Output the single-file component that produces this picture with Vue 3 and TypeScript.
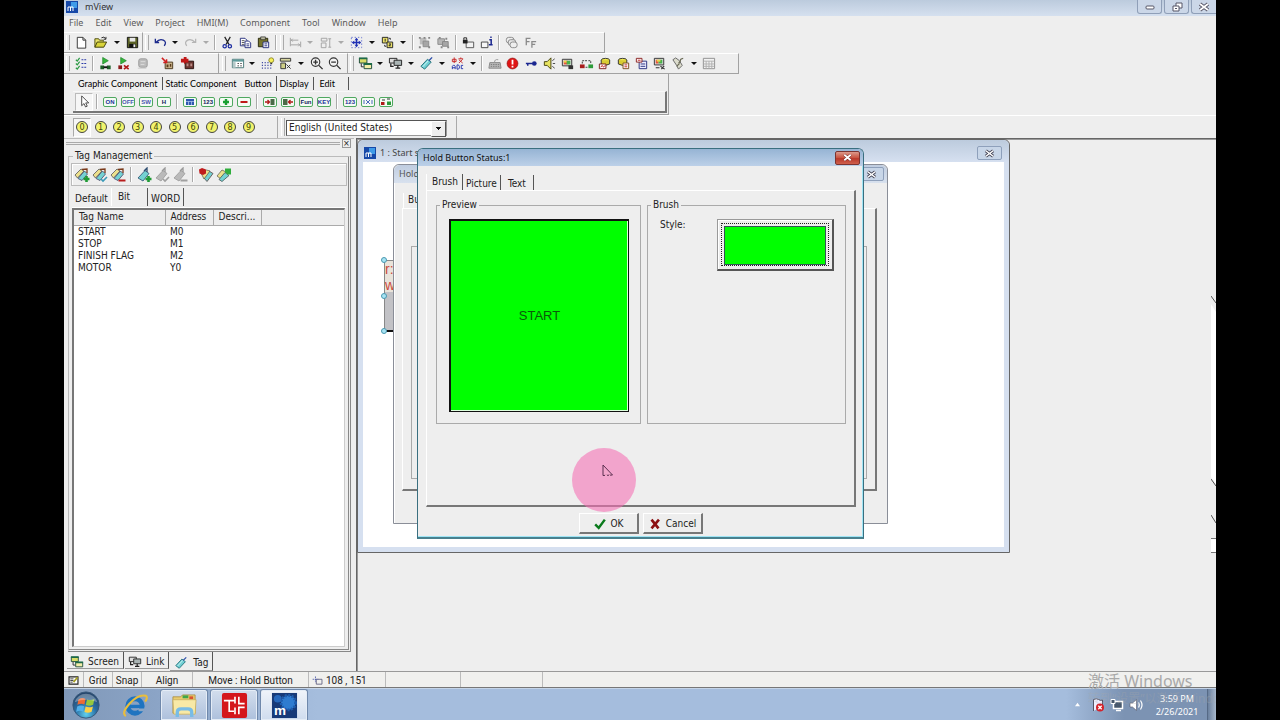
<script setup lang="ts">
import { ref } from 'vue'

type Item = string

const menus = ['File', 'Edit', 'View', 'Project', 'HMI(M)', 'Component', 'Tool', 'Window', 'Help']

// Drawn on a 16 x 16 grid
const art: Record<string, string> = {
  new: '<path d="M3.500 2.500h6l3 3v8.500h-9z" fill="#fff" stroke="#333"/><path d="M9.500 2.500v3h3" fill="none" stroke="#333"/>',
  open: '<path d="M2 13V4h4l1 1.500h4V7" fill="#e9e46a" stroke="#4c4c10"/><path d="M2 13l2.500-5.500h10L11.500 13z" fill="#d9d43a" stroke="#3c3c08"/><path d="M9 3q3-2 4.500 1M13.800 2v2.500h-2.500" fill="none" stroke="#222"/>',
  save: '<path d="M2.500 2.500h11v11h-11z" fill="#5b6226" stroke="#111"/><path d="M5 3h6v4H5z" fill="#e8e8e8"/><path d="M4.500 9.500h7v4h-7z" fill="#111"/><path d="M9 10h2v3H9z" fill="#eee"/>',
  undo: '<path d="M2.500 4v4h4M3 8q4-4.500 8-2.500t1 6" fill="none" stroke="#1c2a8c" stroke-width="1.400"/>',
  redo: '<path d="M13.500 4v4h-4M13 8Q9 3.500 5 5.500t-1 6" fill="none" stroke="#b4b4b4" stroke-width="1.300"/>',
  cut: '<path d="M5 2l4.500 8M11 2L6.500 10" stroke="#222" stroke-width="1.300"/><circle cx="5" cy="12" r="1.800" fill="none" stroke="#1b2ba0" stroke-width="1.300"/><circle cx="10.500" cy="12" r="1.800" fill="none" stroke="#1b2ba0" stroke-width="1.300"/>',
  copy: '<path d="M2.500 3.500h5l2 2v6h-7z" fill="#fff" stroke="#28307e"/><path d="M4 6h3M4 8h3M4 10h3" stroke="#555"/><path d="M7.500 6.500h4l2 2v5h-6z" fill="#fff" stroke="#28307e"/><path d="M9 9.500h3M9 11.500h3" stroke="#28307e"/>',
  paste: '<path d="M2.500 3.500h10v9h-10z" fill="#77752e" stroke="#26260c"/><path d="M5 2h5v3H5z" fill="#b9b9a0" stroke="#222" stroke-width=".7"/><path d="M7.500 7.500h6v6h-6z" fill="#fff" stroke="#28307e"/><path d="M9 9.500h3M9 11.500h3" stroke="#28307e"/>',
  alignx: '<path d="M2.500 3v9M3 5.500h8M3 10.500h10M13.500 7v6M5 4L3.500 5.500 5 7M11 9l1.500 1.500L11 12" fill="none" stroke="#a2a2a2"/>',
  sizex: '<path d="M3.500 3.500h6v3h-6zM3.500 8.500h5v5h-5zM12.500 4v9M11 4h3M11 13h3" fill="none" stroke="#a2a2a2"/>',
  center: '<path d="M2.500 2.500h11v11h-11z" fill="none" stroke="#6a76d0" stroke-dasharray="1.500 2"/><path d="M8 4v8M4 8h8" stroke="#1f2fb4" stroke-width="1.500"/><path d="M6 5.500L8 3l2 2.500zM6 10.500L8 13l2-2.500zM5.500 6L3 8l2.500 2zM10.500 6L13 8l-2.500 2z" fill="#1f2fb4"/>',
  order: '<path d="M2.500 2.500h6v6h-6z" fill="#ece26a" stroke="#222"/><path d="M7.500 7.500h6v6h-6z" fill="#ece26a" stroke="#222"/><path d="M5.500 4v3M9.500 9.500h2l-2 2h2M11 5V3.500H9.500M5 10.500V12h1.500" fill="none" stroke="#222"/>',
  group: '<path d="M3 3h7v7H3z" fill="#bdbdbd"/><path d="M6.500 6.500h6v6h-6z" fill="#a6a6a6" stroke="#8c8c8c"/><path d="M2 2h2v2H2zM12 2h2v2h-2zM2 12h2v2H2zM12 12h2v2h-2zM7 2h2v2H7z" fill="#868686"/>',
  ungroup: '<path d="M2 4h7v6H2z" fill="#b6b6b6" stroke="#8c8c8c"/><path d="M7 7h6v5H7z" fill="#a6a6a6" stroke="#858585"/><path d="M3 2h2v2H3zM10 3h2v2h-2zM5 12h2v2H5zM12 12h2v2h-2z" fill="#868686"/>',
  lock: '<path d="M5.500 7.500h8v6h-8z" fill="#f2f2f2" stroke="#555"/><path d="M2 5h5v4H2z" fill="#222"/><path d="M3 5V3h3v2" fill="none" stroke="#222"/>',
  info: '<path d="M2.500 7.500h7v6h-7z" fill="#f6f6f6" stroke="#444"/><path d="M11 5h2v5M10.500 10.500h4M12 2.500h1.500" fill="none" stroke="#1b2790" stroke-width="1.600"/>',
  shapes: '<rect x="2.500" y="2.500" width="8" height="6" rx="2.500" fill="none" stroke="#888"/><rect x="4.500" y="5" width="8" height="6" rx="2.500" fill="#e6e6e6" stroke="#888"/><rect x="6.500" y="7.500" width="7.500" height="6" rx="2.500" fill="#eee" stroke="#888"/>',
  fonts: '<path d="M3.500 11V3.500H8M3.500 7H7M9.500 13.500V7H14M9.500 10H13" fill="none" stroke="#8a8a8a" stroke-width="1.400"/>',
  checks: '<path d="M2 4l1.500 1.500L6 2M2 8l1.500 1.500L6 6M2 12.500L3.500 14 6 10.500" fill="none" stroke="#2c9a44" stroke-width="1.300"/><path d="M8 4h6M8 8h6M8 12h6" stroke="#2b3aa8" stroke-dasharray="2 1" stroke-width="1.300"/>',
  run: '<path d="M5 1.500l6 3.500-6 3.500z" fill="#36b43c" stroke="#178021" stroke-width=".7"/><path d="M2.500 10h4v4h-4zM9.500 10h4v4h-4z" fill="#1c5e28"/><path d="M6 12h4" stroke="#111" stroke-width="2"/>',
  runx: '<path d="M5 1.500l6 3.500-6 3.500z" fill="#36b43c" stroke="#178021" stroke-width=".7"/><path d="M2.500 10h4v4h-4z" fill="#8a1a1a"/><path d="M8.500 10l5 4M13.500 10l-5 4" stroke="#b01818" stroke-width="1.800"/>',
  stop: '<rect x="4" y="3" width="9" height="9" rx="2" fill="#bcbcbc" stroke="#9a9a9a"/><path d="M6 6h5M6 9h4" stroke="#dcdcdc"/><path d="M3 13h9" stroke="#cacaca"/>',
  dl: '<path d="M5.500 6.500h8v7h-8z" fill="#c8b28a" stroke="#4b3a20"/><path d="M7 9h2v3H7zM10.500 8.500H12v3h-1.500z" fill="#5a3c1c"/><path d="M2 2l5 5M7 3.500V7H3.500" fill="none" stroke="#d02020" stroke-width="1.600"/>',
  ul: '<path d="M5.500 5.500h9v8h-9z" fill="#6b3530" stroke="#2a1210"/><path d="M7 8h2v3H7zM11 8h2v3h-2z" fill="#b98c84"/><path d="M1 3h3V1h3v2h2v4H6l-1 2-1-2H1z" fill="#c01818"/>',
  panel: '<path d="M2.500 3.500h12v9h-12z" fill="#fff" stroke="#487878"/><path d="M3 4h11v2H3z" fill="#5f9c9c"/><path d="M3 6.500h3v6H3z" fill="#b5c8c8"/><path d="M8 8h1.500M11 8h1.500M8 10.500h1.500M11 10.500h1.500" stroke="#333"/>',
  bulb: '<path d="M2 7h1M5 7h1M8 7h1M2 10h1M5 10h1M8 10h1M11 10h1M2 13h1M5 13h1M8 13h1M11 13h1" stroke="#1b2790" stroke-width="1.400"/><circle cx="12" cy="4.500" r="2.600" fill="#f6ef58" stroke="#77711a" stroke-width=".8"/><path d="M11 8h2" stroke="#333" stroke-width="1.500"/>',
  props: '<path d="M2.500 2.500h11v3h-11z" fill="#d8d6a0" stroke="#333"/><path d="M3 7.500h5v6H3z" fill="#d0d088" stroke="#333"/><path d="M9 9l4.500 4.500M13 9.500L9.500 13" stroke="#333"/>',
  zin: '<circle cx="7" cy="6.500" r="4.500" fill="#f3f3f3" stroke="#333" stroke-width="1.200"/><path d="M4.500 6.500h5M7 4v5M10.500 10l4 4" stroke="#333" stroke-width="1.500"/>',
  zout: '<circle cx="7" cy="6.500" r="4.500" fill="#f3f3f3" stroke="#333" stroke-width="1.200"/><path d="M4.500 6.500h5M10.500 10l4 4" stroke="#333" stroke-width="1.500"/>',
  screens: '<path d="M1.500 2.500h8v5h-8z" fill="#d9dc68" stroke="#1a4a38"/><path d="M6.500 8.500h8v5h-8z" fill="#f3eea8" stroke="#1a4a38"/><path d="M1 2.500h9M6 8.500h9" stroke="#1d6a48" stroke-width="2"/><path d="M3.500 8v3.500H6" fill="none" stroke="#222"/>',
  links: '<path d="M1.500 2.500h8v5h-8z" fill="#ddd" stroke="#222"/><path d="M6.500 4.500h8v5.500h-8z" fill="#aab4b4" stroke="#222"/><path d="M8 13h5M10.500 10v3M3 8v3h3" fill="none" stroke="#222" stroke-width="1.400"/>',
  tag: '<path d="M2 11l7-7.500 4 3L6 14z" fill="#6fd0d4" stroke="#25707a"/><path d="M4 11.500l6-6.500" stroke="#d7f4f4"/><path d="M10.500 5L14 1.500" stroke="#2a4ca8" stroke-width="1.400"/>',
  lang: '<path d="M2.500 3.500h4v2.500h-4zM4.500 1.500v6M9 3h5M11.500 1.500V3M9.500 7.500l4-4M9.500 4l4 3.500" fill="none" stroke="#c82828"/><path d="M2.500 14V11L4 9.500 5.500 11v3M2.500 12.500h3M7.500 9.500v4.500h1.500l1-1.200V11L9 9.500zM14 10h-2v3.500h2" fill="none" stroke="#2636b0"/>',
  keyb: '<path d="M3 7h11l1 6H2z" fill="#b9b9b9" stroke="#8a8a8a"/><path d="M4 9h9M4 11h9" stroke="#777" stroke-dasharray="1.500 1"/><path d="M8 7q0-4 4-3" fill="none" stroke="#999"/>',
  alarm: '<circle cx="8" cy="8" r="5.800" fill="#e01414" stroke="#8c0c0c" stroke-width=".7"/><path d="M8 4v5M8 10.500v1.800" stroke="#fff" stroke-width="1.900"/>',
  key: '<circle cx="11" cy="8" r="2.500" fill="#1b2790"/><path d="M2 8h7M4 8v2.500" stroke="#1b2790" stroke-width="1.600"/>',
  sound: '<path d="M2.500 6h3l4-4v12l-4-4h-3z" fill="#e8e460" stroke="#44420c"/><path d="M11 5l2.500-2M11.500 8H14M11 11l2.500 2" stroke="#444"/>',
  monitor: '<path d="M2.500 3.500h10v7h-10z" fill="#ddd" stroke="#333"/><path d="M4 5h4v4H4z" fill="#e8543c"/><path d="M7 5h4v4H7z" fill="#48b04c"/><path d="M4 5h3v2H4z" fill="#e9d84c"/><path d="M9 10h5v4H9z" fill="#333"/>',
  flow: '<path d="M1 9h5v4H1z" fill="#a81c1c"/><path d="M10 9h5v4h-5z" fill="#2d9c3a"/><path d="M3.500 8V5H6M10 5h2.500v3M6.500 5h3M7 12h2" fill="none" stroke="#333" stroke-dasharray="2 1"/>',
  db1: '<ellipse cx="9" cy="4.500" rx="4.500" ry="2" fill="#f0e84c" stroke="#333"/><path d="M4.500 4.500v4q4.500 3 9 0v-4" fill="#d8cc34" stroke="#333"/><path d="M2.500 8.500h7v5h-7z" fill="#fff" stroke="#7a1c1c"/><path d="M4 12l1.500-2L7 12l1.500-2" fill="none" stroke="#c02020"/>',
  db2: '<ellipse cx="7" cy="4.500" rx="4.500" ry="2" fill="#f0e84c" stroke="#333"/><path d="M2.500 4.500v4q4.500 3 9 0v-4" fill="#d8cc34" stroke="#333"/><path d="M7.500 7.500h6v6h-6z" fill="#fff" stroke="#7a4c1c"/><path d="M9 9.500h3M9 11.500h3" stroke="#c02020"/>',
  recipe: '<path d="M5.500 5.500h8v8h-8z" fill="#eef" stroke="#28307e"/><path d="M7 8.500h5M7 11h5" stroke="#28307e"/><path d="M2.500 2.500h6v4h-6z" fill="#fff" stroke="#8a2020"/><path d="M4 4.500h3" stroke="#c02020"/>',
  remote: '<path d="M2.500 2.500h10v7h-10z" fill="#ddd" stroke="#333"/><path d="M4 4h3v4H4z" fill="#e8543c"/><path d="M7 4h4v4H7z" fill="#48b04c"/><path d="M5 4h4v2H5z" fill="#e9d84c"/><path d="M4 12.500h4M9 11l4.500 3M13 10.500L10 14" stroke="#333" stroke-width="1.200"/>',
  wrench: '<path d="M2 4l3-2 4 3 3 5-4 4-2-4z" fill="#dcdccc" stroke="#666"/><path d="M13 2.500q-3.500.5-3 3L8 8M6 11l3-3" fill="none" stroke="#6c6c58" stroke-width="1.300"/>',
  grid: '<path d="M2.500 2.500h12v11h-12z" fill="#f2f2f2" stroke="#8f8f8f"/><path d="M3 5.500h11M3 8.500h11M3 11h11M5.500 5.500v8M8.500 5.500v8M11.500 5.500v8" stroke="#b0b0b0"/>',
  arrow: '<path d="M5 2v10.500l2.500-2.300 1.600 3.600 1.800-.8-1.600-3.500h3.200z" fill="#fff" stroke="#333" stroke-width=".9"/>',
}

const tagBody = (c1: string, c2: string) =>
  `<path d="M1 8l6-6 3 2L3.500 11z" fill="${c1}" stroke="#555" stroke-width=".8"/><path d="M4 11.500L10.500 4l3 3L8 13.500z" fill="${c2}" stroke="#446" stroke-width=".8"/><path d="M8 2.500l5-.5v4" fill="none" stroke="#7a3a1a" stroke-width="1.300"/>`
const plus = (c: string) => `<path d="M12.500 9v6M9.500 12h6" stroke="${c}" stroke-width="2.600"/>`
const check = (c: string) => `<path d="M9 12l2 2 4-4" fill="none" stroke="${c}" stroke-width="1.600"/>`
const minus = (c: string) => `<path d="M8.500 13.500H15.500" stroke="${c}" stroke-width="2"/>`
const single = (fill: string, line: string) =>
  `<path d="M2 11l7-7.500 4 3L7 14z" fill="${fill}" stroke="${line}" stroke-width=".8"/><path d="M8 4l3-3v4" fill="none" stroke="${line}" stroke-width="1.300"/>`
Object.assign(art, {
  tgAdd: tagBody('#ece08c', '#74d2d2') + plus('#1f9a35'),
  tgEdit: tagBody('#ece08c', '#74d2d2') + check('#3a9ab8'),
  tgDel: tagBody('#ece08c', '#74d2d2') + minus('#b81c1c'),
  tAdd: single('#74d2d2', '#2c4c70') + plus('#1f9a35'),
  tEdit: single('#bababa', '#999') + check('#a0a0a0'),
  tDel: single('#bababa', '#999') + minus('#a0a0a0'),
  tImp: '<path d="M6 11l5-7 4 2.500-6 8z" fill="#74d2d2" stroke="#544" stroke-width=".8"/><path d="M6 12L3.500 7l5-4L12 4z" fill="#ece08c" stroke="#554" stroke-width=".7"/><path d="M1 2.500L4 1l4 1.500v4L5 8 1.500 6.500z" fill="#c01c1c"/>',
  tExp: '<path d="M1 9l5-6 4 2-5 7z" fill="#ece08c" stroke="#554" stroke-width=".7"/><path d="M3 12.500l6-7 4 3L6 14.500z" fill="#74d2d2" stroke="#455" stroke-width=".8"/><path d="M9 1.500h6v6h-3.500L9 5z" fill="#2fae3c"/>',
})

// Framed green palette buttons on a 16 x 12 grid
const word = (t: string, c = '#22309a') =>
  `<text x="8" y="8" text-anchor="middle" font-size="6" font-weight="bold" font-family="Liberation Sans, sans-serif" fill="${c}">${t}</text>`
const palette: Record<string, string> = {
  on: word('ON'), off: word('OFF', '#4a56b0'), sw: word('SW', '#4a56b0'), h: word('H', '#101a60'),
  list: '<path d="M4 3h8v6H4z" fill="#2f58b0"/><path d="M4 5.500h8M6.500 5.500V9M9.500 5.500V9" stroke="#cfe0ff" stroke-width=".6"/>',
  n1: word('123', '#101a60'),
  add: '<path d="M8 3v6M5 6h6" stroke="#18a030" stroke-width="2.400"/>',
  sub: '<path d="M4.500 6h7" stroke="#c01818" stroke-width="2"/>',
  inn: '<path d="M3 6h4M5.500 4L7.500 6l-2 2" fill="none" stroke="#b01818" stroke-width="1.300"/><path d="M8.500 3h4v6h-4z" fill="#4a6a48"/>',
  out: '<path d="M3 3h4.500v6H3z" fill="#4a6a48"/><path d="M13 6H9M10.500 4l-2 2 2 2" fill="none" stroke="#b01818" stroke-width="1.300"/>',
  fun: word('Fun', '#101a60'), keyw: word('KEY'), n2: word('123'),
  x: '<path d="M6 4l4 4M10 4L6 8M4 4v4M12 4v4" stroke="#3a58b8" stroke-width=".9"/>',
  mix: '<path d="M3 6h3.500v3H3z" fill="#b01818"/><path d="M9 5.500h4V9H9z" fill="#2a9a38"/><path d="M4 4h3M9 3h3" stroke="#333"/>',
}

const row1a: Item[] = ['new', 'open', 'v', 'save']
const row1b: Item[] = ['undo', 'v', 'redo', 'w', '|', 'cut', 'copy', 'paste', '|']
const row1c: Item[] = ['alignx', 'w', 'sizex', 'w', 'center', 'v', 'order', 'v', '|', 'group', 'ungroup', '|', 'lock', 'info', '|', 'shapes', 'fonts']
const row2a: Item[] = ['checks', '|', 'run', 'runx', 'stop']
const row2a2: Item[] = ['dl', 'ul']
const row2b: Item[] = ['panel', 'v', 'bulb', 'props', 'v', 'zin', 'zout']
const row2c: Item[] = ['screens', 'v', 'links', 'v', 'tag', 'v', 'lang', 'v', '|', 'keyb', 'alarm', 'key', 'sound', 'monitor', 'flow', 'db1', 'db2', 'recipe', 'remote', 'wrench', 'v', 'grid']
const bands: { cls: string; groups: Item[][] }[][] = [
  [
    { cls: 'b1a', groups: [row1a] },
    { cls: 'b1b', groups: [row1b] },
    { cls: 'b1c', groups: [row1c] },
  ],
  [
    { cls: 'b2a', groups: [row2a, row2a2] },
    { cls: 'b2b', groups: [row2b] },
    { cls: 'b2c', groups: [row2c] },
  ],
]
const paletteItems = ['on', 'off', 'sw', 'h', '|', 'list', 'n1', 'add', 'sub', '|', 'inn', 'out', 'fun', 'keyw', '|', 'n2', 'x', 'mix']
const tagTools = ['tgAdd', 'tgEdit', 'tgDel', '|', 'tAdd', 'tEdit', 'tDel', '|', 'tImp', 'tExp']

const paletteTabs = ['Graphic Component', 'Static Component', 'Button', 'Display', 'Edit']
const paletteTab = ref('Button')
const tagTabs = ['Default', 'Bit', 'WORD']
const tagTab = ref('Bit')
const dialogTabs = ['Brush', 'Picture', 'Text']
const dialogTab = ref('Brush')
const state = ref(0)
const language = ref('English (United States)')
const tags = [
  { name: 'START', address: 'M0' },
  { name: 'STOP', address: 'M1' },
  { name: 'FINISH FLAG', address: 'M2' },
  { name: 'MOTOR', address: 'Y0' },
]
</script>

<template>
  <div class="desk">
    <div class="screen">
      <header class="titlebar">
        <svg class="appicon" viewBox="0 0 12 12"><rect width="12" height="12" fill="#1648a8" /><path d="M5 1h6v6H5z" fill="#3f9be8" /><path d="M2 10V6h5v4M4.500 6v4" fill="none" stroke="#fff" /></svg>
        <span class="apptitle">mView</span>
        <div class="winbtns">
          <button aria-label="Minimize"><svg viewBox="0 0 12 12"><rect x="2" y="5" width="8" height="3" rx="1" fill="#fff" stroke="#556" /></svg></button>
          <button aria-label="Restore"><svg viewBox="0 0 12 12"><path d="M5 2h6v5H5z" fill="#fff" stroke="#556" /><path d="M2 5h6v5H2z" fill="#fff" stroke="#556" /><path d="M4 7.500h2" stroke="#556" /></svg></button>
          <button class="last" aria-label="Close"><svg viewBox="0 0 12 12"><path d="M2 3l8 6M10 3L2 9" stroke="#556" stroke-width="3.500" /><path d="M2 3l8 6M10 3L2 9" stroke="#fff" stroke-width="1.700" /></svg></button>
        </div>
      </header>

      <nav class="menubar">
        <button v-for="m in menus" :key="m">{{ m }}</button>
      </nav>

      <div v-for="(row, r) in bands" :key="r" class="bandrow">
        <div v-for="band in row" :key="band.cls" class="band" :class="band.cls">
          <div v-for="(g, i) in band.groups" :key="i" class="bgroup">
            <template v-for="(it, k) in g" :key="k">
              <i v-if="it === '|'" class="sep"></i>
              <button v-else-if="it === 'v' || it === 'w'" class="drop" :class="{ off: it === 'w' }" aria-label="More"></button>
              <button v-else class="tool" :aria-label="it"><svg viewBox="0 0 16 16" v-html="art[it]"></svg></button>
            </template>
          </div>
        </div>
      </div>

      <div class="palette">
        <div class="ptabs">
          <button v-for="t in paletteTabs" :key="t" :class="{ on: t === paletteTab }" @click="paletteTab = t">{{ t }}</button>
        </div>
        <div class="pbody">
          <button class="pick" aria-label="Select"><svg viewBox="0 0 16 16" v-html="art.arrow"></svg></button>
          <i class="sep"></i>
          <template v-for="(p, k) in paletteItems" :key="k">
            <i v-if="p === '|'" class="sep"></i>
            <button v-else class="pal" :aria-label="p">
              <svg viewBox="0 0 16 12"><rect x="1.500" y="1.500" width="13" height="9" rx="1.500" fill="#f4fbf4" stroke="#4fa860" /><g v-html="palette[p]"></g></svg>
            </button>
          </template>
        </div>
      </div>

      <div class="staterow">
        <div class="states">
          <button v-for="n in 10" :key="n" :class="{ on: n - 1 === state }" @click="state = n - 1"><span>{{ n - 1 }}</span></button>
        </div>
        <div class="langbox">
          <select v-model="language" aria-label="Language"><option>English (United States)</option></select>
        </div>
      </div>

      <main class="work">
        <aside class="side">
          <div class="gripbar"><i></i><button aria-label="Close panel">×</button></div>
          <fieldset class="tagbox">
            <legend>Tag Management</legend>
            <div class="tagtools">
              <template v-for="(t, k) in tagTools" :key="k">
                <i v-if="t === '|'" class="sep"></i>
                <button v-else class="tool" :aria-label="t"><svg viewBox="0 0 16 16" v-html="art[t]"></svg></button>
              </template>
            </div>
            <div class="tagtabs">
              <button v-for="t in tagTabs" :key="t" :class="{ on: t === tagTab }" @click="tagTab = t">{{ t }}</button>
            </div>
            <div class="list">
              <table>
                <colgroup><col class="c1" /><col class="c2" /><col class="c3" /><col /></colgroup>
                <thead><tr><th>Tag Name</th><th>Address</th><th>Descri...</th><th></th></tr></thead>
                <tbody>
                  <tr v-for="t in tags" :key="t.name"><td>{{ t.name }}</td><td>{{ t.address }}</td><td></td><td></td></tr>
                </tbody>
              </table>
            </div>
          </fieldset>
          <div class="sidetabs">
            <button><svg viewBox="0 0 16 16" v-html="art.screens"></svg>Screen</button>
            <button><svg viewBox="0 0 16 16" v-html="art.links"></svg>Link</button>
            <button class="on"><svg viewBox="0 0 16 16" v-html="art.tag"></svg>Tag</button>
          </div>
        </aside>

        <section class="mdi">
          <svg class="stray" viewBox="0 0 5 260"><path d="M0 8l5 8v172l-5-7z" fill="#fff" /><path d="M0 0l5 7M0 183l5 7M0 219l5 8" stroke="#555" /><path d="M0 243h5v13H0z" fill="#fff" /><path d="M0 242.500h5M0 256.500h5" stroke="#777" /></svg>

          <div class="win child">
            <div class="wtitle">
              <svg class="appicon" viewBox="0 0 12 12"><rect width="12" height="12" fill="#1648a8" /><path d="M5 1h6v6H5z" fill="#3f9be8" /><path d="M2 10V6h5v4M4.500 6v4" fill="none" stroke="#fff" /></svg>
              <span>1 : Start screen</span>
              <button class="wclose" aria-label="Close"><svg viewBox="0 0 12 12"><path d="M2 3l8 6M10 3L2 9" stroke="#445" stroke-width="3.500" /><path d="M2 3l8 6M10 3L2 9" stroke="#fff" stroke-width="1.700" /></svg></button>
            </div>
            <div class="canvas">
              <div class="object"><div class="otext">r:<br />w:</div><b></b><b></b><b></b></div>
            </div>
          </div>

          <div class="win behind">
            <div class="wtitle">
              <span>Hold Button</span>
              <button class="wclose" aria-label="Close"><svg viewBox="0 0 12 12"><path d="M2 3l8 6M10 3L2 9" stroke="#445" stroke-width="3.500" /><path d="M2 3l8 6M10 3L2 9" stroke="#fff" stroke-width="1.700" /></svg></button>
            </div>
            <div class="btab">Button</div>
            <div class="bpage"><div class="bgrp"></div></div>
          </div>

          <div class="win dialog" role="dialog" aria-label="Hold Button Status:1">
            <div class="wtitle">
              <span>Hold Button Status:1</span>
              <button class="wclose red" aria-label="Close"><svg viewBox="0 0 12 12"><path d="M2.500 3l7 6M9.500 3l-7 6" stroke="#6b2020" stroke-width="3.200" /><path d="M2.500 3l7 6M9.500 3l-7 6" stroke="#fff" stroke-width="2" /></svg></button>
            </div>
            <div class="dtabs">
              <button v-for="t in dialogTabs" :key="t" :class="{ on: t === dialogTab }" @click="dialogTab = t">{{ t }}</button>
            </div>
            <div class="dpage">
              <fieldset class="dgroup prev">
                <legend>Preview</legend>
                <div class="preview">START</div>
              </fieldset>
              <fieldset class="dgroup brush">
                <legend>Brush</legend>
                <label for="brushstyle">Style:</label>
                <button id="brushstyle" class="swatch"><span></span></button>
              </fieldset>
            </div>
            <div class="dfoot">
              <button><svg viewBox="0 0 16 16"><path d="M2.500 8.500l4 4L13.500 3" fill="none" stroke="#0a7a1c" stroke-width="2.800" /></svg>OK</button>
              <button><svg viewBox="0 0 16 16"><path d="M4 3l8 10M12.500 3L4 13" stroke="#8c0f12" stroke-width="3" /></svg>Cancel</button>
            </div>
          </div>

          <div class="spot"><svg viewBox="0 0 14 14"><path d="M3 1v10.500L12.500 11z" fill="#f3a6cb" stroke="#5b2f50" /><path d="M5 11.500h5" stroke="#f3a6cb" stroke-width="1.500" stroke-dasharray="2 2" /></svg></div>
        </section>
      </main>

      <footer class="status">
        <span class="s0"><svg viewBox="0 0 16 16"><path d="M2.500 3.500h11v9h-11z" fill="#fff" stroke="#222" stroke-width="1.400" /><path d="M4 6h4M4 8h4M4 10h3" stroke="#222" /><path d="M8 10l5-6" stroke="#a6a020" stroke-width="2" /></svg></span>
        <button class="s1">Grid</button>
        <button class="s2">Snap</button>
        <span class="s3">Align</span>
        <span class="s4">Move : Hold Button</span>
        <span class="s5"><svg viewBox="0 0 16 16"><path d="M6.500 6.500h7v6h-7z" fill="none" stroke="#557" /><path d="M2 6.500h7M5.500 3v7" stroke="#4a58a8" stroke-dasharray="2 1" /></svg>108 , 151</span>
        <span class="s6"></span>
        <span class="s7"></span>
        <span class="s8"></span>
      </footer>

      <div class="taskbar">
        <button class="start" aria-label="Start">
          <svg viewBox="0 0 32 32"><defs><radialGradient id="orb" cx=".5" cy=".85" r=".8"><stop offset="0" stop-color="#5fd0ee" /><stop offset=".5" stop-color="#2a6ea4" /><stop offset="1" stop-color="#26466c" /></radialGradient></defs><circle cx="16" cy="16" r="14" fill="url(#orb)" stroke="#38587a" /><path d="M8 10q4-2.500 7.500-.5l-1.200 6q-3.500-1.700-7.500.3z" fill="#ee6a34" /><path d="M17 10q4 1.700 8-.4l-1.400 6q-4 2-7.800.3z" fill="#95c83e" /><path d="M6.600 17.500q3.800-2 7.400-.3l-1.200 5.800q-3.600-1.700-7.300.4z" fill="#52b0ea" /><path d="M15.600 17.700q3.900 1.600 7.800-.2l-1.400 5.800q-4 2-7.700.2z" fill="#fbd047" /><path d="M4 13a12.500 12.500 0 0 1 24 0q-12-5-24 0z" fill="#fff" opacity=".3" /></svg>
        </button>
        <button class="task plain" aria-label="Internet Explorer">
          <svg viewBox="0 0 28 28"><circle cx="14.500" cy="14.500" r="7.500" fill="none" stroke="#1f74c0" stroke-width="5" /><path d="M9 15h12" stroke="#1f74c0" stroke-width="3.500" /><path d="M17.500 17h7l-1 3h-5z" fill="#8ba6c4" /><path d="M5 25q-5-3 4-13T26 4q2 2-1 6" fill="none" stroke="#e9bd3c" stroke-width="2.200" /></svg>
        </button>
        <button class="task" aria-label="Explorer">
          <svg viewBox="0 0 28 28"><path d="M2 5h8l2-2h13v19H2z" fill="#e9cd70" stroke="#a5873c" stroke-width=".8" /><path d="M12 3.500h6v3h-6z" fill="#3fa64a" /><path d="M19 4.500h4v3h-4z" fill="#d8542e" /><path d="M2 8h24l-1 15H3z" fill="#f8e9a6" stroke="#c9ad5c" stroke-width=".8" /><path d="M6.500 26v-5q0-3.500 4-3.500h7q4 0 4 3.500v5" fill="none" stroke="#78bce6" stroke-width="3.500" /></svg>
        </button>
        <button class="task" aria-label="PLC editor">
          <svg viewBox="0 0 28 28"><rect x="1" y="1" width="26" height="26" rx="2" fill="#d4161c" /><path d="M3 9h11M8.500 9v11h5M14.500 5v7M14.500 16v7M18.500 5v7h6M18.500 23v-7h6" fill="none" stroke="#fff" stroke-width="1.700" /></svg>
        </button>
        <button class="task active" aria-label="mView">
          <svg viewBox="0 0 28 28"><rect x="1" y="1" width="26" height="26" fill="#173a78" /><circle cx="18" cy="11" r="7.500" fill="#2f7cd0" stroke="#1d5cae" stroke-width="3" stroke-dasharray="2 1.500" /><circle cx="7" cy="7" r="4" fill="#2668bc" /><text x="3" y="24" font-size="14" font-weight="bold" font-family="Liberation Sans, sans-serif" fill="#fff">m</text></svg>
        </button>
        <div class="tray">
          <svg class="up" viewBox="0 0 8 6"><path d="M1 5l3-4 3 4z" fill="#fff" /></svg>
          <svg viewBox="0 0 16 16"><path d="M3.500 14V2.500q3-1.500 5 0t4 .5v6" fill="#eef" stroke="#556" /><circle cx="10" cy="10.500" r="4" fill="#d4222a" /><path d="M8.300 8.800l3.400 3.400M11.700 8.800l-3.400 3.400" stroke="#fff" stroke-width="1.300" /></svg>
          <svg viewBox="0 0 16 16"><path d="M4.500 4.500h9v7h-9z" fill="#47586c" stroke="#fff" stroke-width="1.500" /><path d="M7 13.500h5" stroke="#fff" stroke-width="1.500" /><path d="M2 2.500h4v4H2z" fill="#47586c" stroke="#fff" /></svg>
          <svg viewBox="0 0 16 16"><path d="M2 6h2.500l4-3.500v11l-4-3.500H2z" fill="#fff" stroke="#556" stroke-width=".6" /><path d="M10.500 5.500q1.500 2.500 0 5M12.500 3.500q3 4.500 0 9" fill="none" stroke="#fff" stroke-width="1.200" /></svg>
        </div>
        <div class="clock"><span>3:59 PM</span><span>2/26/2021</span></div>
        <div class="peek"></div>
      </div>

      <div class="activate"><strong>激活 Windows</strong><small>转到“设置”以激活 Windows。</small></div>
    </div>
  </div>
</template>

<style>
html, body { margin: 0; background: #000; }
</style>

<style scoped>
* { box-sizing: border-box; }
.desk { min-height: 100vh; background: #000; padding: 0 5%; font: 10px/12px "DejaVu Sans Condensed", "Noto Sans", sans-serif; color: #222; }
.screen { position: relative; height: 100vh; min-height: 700px; display: flex; flex-direction: column; background: #eee; overflow: hidden; }
button { font: inherit; color: inherit; background: none; border: 0; padding: 0; margin: 0; }
svg { display: block; }
.titlebar { flex: none; height: 16px; display: flex; align-items: center; background: linear-gradient(#bccbdd, #d5e0ef); padding: 0 0 2px 2px; font: 9px/12px "Noto Sans", sans-serif; color: #333; }
.appicon { width: 12px; height: 12px; flex: none; }
.apptitle { margin-left: 7px; flex: 1; }
.winbtns { display: flex; gap: 2px; align-self: flex-start; }
.winbtns button { width: 25px; height: 14px; border: 1px solid #8f9fb8; border-top: 0; border-radius: 0 0 3px 3px; background: #cbd7e8; display: flex; justify-content: center; align-items: center; }
.winbtns .last { border-right: 0; border-radius: 0 0 0 3px; }
.winbtns svg { width: 12px; height: 12px; }
.menubar { flex: none; height: 16px; display: flex; align-items: center; gap: 12px; padding: 0 0 2px 5px; font: 9px/12px "Noto Sans", sans-serif; color: #5c5c5c; }
.bandrow { flex: none; display: flex; height: 21px; }
.band { display: flex; align-items: center; justify-content: space-between; border-top: 1px solid #fff; border-right: 1px solid #a2a2a2; border-bottom: 1px solid #a2a2a2; }
.band::before { content: ""; align-self: stretch; width: 2px; margin: 2px 0; border-left: 1px solid #fff; border-right: 1px solid #aaa; flex: none; }
.bgroup { display: flex; align-items: center; justify-content: space-between; flex: 1; margin-left: 2px; }
.b1a { width: 79px; padding-left: 2px; }
.b1b { width: 136px; padding-left: 2px; border-right: 0; }
.b1c { width: 326px; padding: 0 65px 0 1px; }
.b2a { width: 155px; padding: 0 22px 0 2px; }
.b2a .bgroup + .bgroup { flex: none; width: 38px; margin-left: 7px; }
.b2b { width: 129px; padding: 0 3px; }
.b2c { width: 391px; padding: 0 20px 0 2px; }
.tool { width: 18px; height: 18px; display: grid; place-items: center; flex: none; }
.tool svg { width: 15px; height: 15px; }
.drop { width: 12px; height: 16px; display: grid; place-items: center; flex: none; }
.drop::before { content: ""; border: 3px solid transparent; border-top-color: #111; border-bottom: 0; }
.drop.off::before { border-top-color: #aaa; }
.sep { width: 2px; margin: 0 2px; height: 15px; border-left: 1px solid #aaa; border-right: 1px solid #fff; flex: none; }
.palette { flex: none; width: 605px; height: 41px; border-right: 1px solid #a2a2a2; border-bottom: 1px solid #a2a2a2; padding: 2px 1px 1px 9px; }
.ptabs { height: 15px; display: flex; font: 9px/12px Lato, sans-serif; color: #000; }
.ptabs button { padding: 1px 4px 0 3px; border-right: 1px solid #555; height: 13px; margin-top: 1px; white-space: nowrap; }
.ptabs button:first-child { padding-left: 5px; }
.ptabs button:nth-child(2) { border: 0; }
.ptabs .on { height: 15px; margin-top: 0; padding: 0 4px; }
.ptabs button:last-child { padding: 1px 13px 0 6px; }
.pbody { height: 22px; display: flex; align-items: center; border-right: 2px solid #777; border-bottom: 2px solid #777; border-top: 1px solid #f8f8f8; padding-left: 2px; }
.pbody .sep { margin: 0 3px; }
.pick { width: 18px; height: 18px; display: grid; place-items: center; border: 1px solid #bbb; border-right-color: #fff; border-bottom-color: #fff; background: #f6f6f6; }
.pick svg { width: 15px; height: 15px; }
.pal { width: 18px; height: 18px; display: grid; place-items: center; }
.pal svg { width: 16px; height: 12px; }
.staterow { flex: none; height: 23px; display: flex; border-top: 1px solid #fff; }
.states { width: 214px; border-right: 1px solid #aaa; display: flex; align-items: center; padding-left: 9px; }
.states button { width: 18px; height: 19px; display: grid; place-items: center; border: 1px solid transparent; }
.states button:nth-child(even) { width: 19px; }
.states .on { border-color: #aaa #fff #fff #aaa; background: #f6f6f6; }
.states span { width: 12px; height: 12px; border-radius: 50%; border: 1px solid #444; background: #f1f36c; display: block; font-size: 9px; line-height: 10px; color: #44480a; text-align: center; }
.langbox { position: relative; width: 179px; border-right: 1px solid #aaa; padding: 4px 9px 2px 8px; display: flex; }
.langbox::before { content: ""; position: absolute; left: 3px; top: 2px; bottom: 2px; width: 2px; border-left: 1px solid #fff; border-right: 1px solid #aaa; }
.langbox select { appearance: none; width: 161px; height: 16px; border: 1px solid #555; border-right-color: #999; border-bottom-color: #999; border-radius: 0; background: #fff; font: inherit; color: #222; padding: 0 2px; outline: 0; }
.langbox::after { content: ""; position: absolute; right: 10px; top: 5px; width: 13px; height: 14px; background: conic-gradient(from -45deg at 50% 100%, #111 0 25%, transparent 0) center / 6px 3px no-repeat, #eee; background: linear-gradient(#111, #111) center 5px / 5px 1px no-repeat, linear-gradient(#111, #111) center 6px / 3px 1px no-repeat, linear-gradient(#111, #111) center 7px / 1px 1px no-repeat, #eee; border: 1px solid #fff; border-right-color: #555; border-bottom-color: #555; pointer-events: none; }
.work { flex: 1; min-height: 0; display: flex; }
.side { width: 290px; flex: none; display: flex; flex-direction: column; border-top: 1px solid #bbb; padding: 0 2px 0 2px; }
.gripbar { height: 8px; display: flex; align-items: center; gap: 2px; flex: none; }
.gripbar i { flex: 1; height: 3px; border-top: 1px solid #aaa; border-bottom: 1px solid #aaa; }
.gripbar button { width: 9px; height: 9px; border: 1px solid #999; line-height: 7px; font-size: 9px; margin-right: 1px; }
.tagbox { flex: 1; min-height: 0; border: 1px solid #bbb; border-right: 3px double #888; border-bottom: 3px double #888; margin: 3px 1px 0 2px; padding: 0 0 0 1px; display: flex; flex-direction: column; min-width: 0; }
.tagbox legend { margin-left: 3px; padding: 0 2px; }
.tagtools { height: 23px; flex: none; display: flex; align-items: center; border: 1px solid #bbb; box-shadow: inset 1px 1px #fff; padding-left: 1px; margin: 1px 1px 0 1px; }
.tagtools .tool svg { width: 16px; height: 16px; }
.tagtools .sep { margin: 0 3px; }
.tagtabs { flex: none; display: flex; height: 21px; margin: 1px 2px 0; border-bottom: 1px solid #fff; }
.tagtabs button { padding: 3px 3px 0; height: 18px; margin-top: 1px; }
.tagtabs .on { padding: 1px 17px 2px 6px; border-right: 1px solid #555; border-left: 1px solid #fff; }
.tagtabs button:last-child { border-right: 1px solid #555; }
.list { flex: 1; min-height: 0; background: #fff; border: 2px solid #777; border-right: 1px solid #ccc; border-bottom: 1px solid #ccc; margin: 0 3px 2px 2px; }
.list table { border-collapse: collapse; table-layout: fixed; width: 100%; }
.list th { background: #eee; font-weight: normal; text-align: left; height: 15px; padding: 0 0 0 5px; border-right: 1px solid #aaa; border-bottom: 1px solid #aaa; white-space: nowrap; }
.list th:last-child { border-right: 0; }
.list td { padding: 0 0 0 4px; height: 12px; line-height: 12px; white-space: nowrap; }
.list td + td { padding-left: 5px; }
.c1 { width: 91px; }
.c2 { width: 48px; }
.c3 { width: 48px; }
.sidetabs { flex: none; display: flex; height: 19px; align-items: flex-start; margin: 0 0 0 1px; gap: 1px; }
.sidetabs button { display: flex; align-items: center; gap: 4px; height: 17px; padding: 3px 4px 0 3px; border-right: 1px solid #555; border-bottom: 1px solid #999; }
.sidetabs svg { width: 14px; height: 14px; }
.sidetabs button.on { height: 19px; padding: 4px 4px 0 4px; gap: 5px; }
.mdi { flex: 1; position: relative; margin-left: 2px; border: 1px solid #666; border-right: 0; border-bottom: 0; overflow: hidden; box-shadow: inset 1px 1px #999; }
.stray { position: absolute; right: 0; top: 157px; width: 5px; height: 260px; }
.win { position: absolute; display: flex; flex-direction: column; font: 9px/12px "Noto Sans", sans-serif; }
.wtitle { display: flex; align-items: center; flex: none; }
.wtitle span { flex: 1; white-space: nowrap; overflow: hidden; }
.wclose { width: 25px; height: 14px; border: 1px solid #8ea0bb; border-radius: 2px; background: #c8d6e8; display: grid; place-items: center; }
.wclose svg { width: 11px; height: 11px; }
.wclose.red { border-color: #7c3430; background: linear-gradient(#dc9a8c, #c8503c 50%, #b8382a 55%, #d0604c); }
.child { left: 0; top: 0; width: 653px; height: 414px; background: #d6e0f0; border: 1px solid #666; border-radius: 6px 6px 0 0; padding: 0 5px 5px; }
.child .wtitle { height: 22px; margin: 0 -5px; padding: 4px 7px 0 6px; background: linear-gradient(#bccbdd, #d6e0f0); border-radius: 6px 6px 0 0; }
.child .wtitle span { margin-left: 4px; color: #444; }
.child .canvas { flex: 1; background: #fff; position: relative; }
.object { position: absolute; left: 21px; top: 98px; width: 60px; height: 72px; background: #c2c2c6; border-top: 1px solid #888; border-left: 1px solid #888; border-bottom: 2px solid #111; }
.otext { height: 31px; background: #e9e3da; color: #cc4a40; font: 14px/16px "Liberation Sans", sans-serif; }
.object b { position: absolute; left: -4px; top: -4px; width: 6px; height: 6px; border-radius: 50%; background: #a8e4f4; border: 1px solid #4a98b0; }
.object b:nth-of-type(2) { top: 32px; }
.object b:nth-of-type(3) { top: 67px; }
.behind { left: 36px; top: 25px; width: 495px; height: 360px; background: #eee; border: 1px solid #8a8e98; border-radius: 6px 6px 0 0; box-shadow: inset 1px 0 #fff; }
.behind .wtitle { height: 18px; padding: 0 3px 0 5px; background: linear-gradient(#c0cde0, #d8e1ee); border-radius: 6px 6px 0 0; color: #555; }
.btab { margin: 10px 0 0 9px; padding-left: 4px; height: 15px; border-left: 1px solid #fff; font: 10px/13px "DejaVu Sans Condensed", sans-serif; }
.bpage { flex: 1; margin: 0 10px 32px 8px; border: 1px solid #fff; border-right: 2px solid #777; border-bottom: 2px solid #777; padding: 37px 8px 10px; }
.bgrp { height: 100%; border: 1px solid #aaa; }
.dialog { left: 60px; top: 9px; width: 447px; height: 391px; background: #eee; border: 1px solid #3a6f80; border-bottom: 2px solid #48808e; border-radius: 6px 6px 0 0; box-shadow: inset -1px -1px #9fe4f4; padding: 0 7px 4px 8px; }
.dialog .wtitle { height: 17px; margin: 0 -7px 0 -8px; padding: 0 3px 0 5px; background: linear-gradient(#96b4d4, #bcd0e8); border-radius: 5px 5px 0 0; color: #111; }
.dtabs { flex: none; display: flex; height: 24px; padding-top: 8px; font: 10px/12px "DejaVu Sans Condensed", sans-serif; }
.dtabs button { padding: 2px 3px 0; border-right: 1px solid #555; height: 15px; margin-top: 1px; }
.dtabs .on { padding: 0 4px 1px 5px; margin-top: 0; height: 16px; border-left: 1px solid #fff; }
.dtabs button:last-child { padding: 2px 7px 0 7px; }
.dpage { flex: 1; display: flex; align-items: flex-start; gap: 6px; border: 1px solid #fff; border-right: 2px solid #777; border-bottom: 2px solid #777; padding: 8px 8px 0 9px; font: 10px/12px "DejaVu Sans Condensed", sans-serif; }
.dgroup { height: 225px; margin: 0; border: 1px solid #aaa; padding: 0; min-width: 0; }
.dgroup legend { margin-left: 3px; padding: 0 2px; }
.prev { flex: 206; }
.brush { flex: 200; }
.preview { margin: 8px 11px 0 12px; height: 193px; background: #0f0; border: 2px solid #111; border-right-width: 1px; border-bottom-width: 1px; box-shadow: inset -1px -1px #dfd; display: grid; place-items: center; font: 13px/16px "Liberation Sans", sans-serif; color: #0a5a0a; }
.brush label { margin: 8px 0 0 12px; float: left; }
.swatch { float: right; width: 117px; height: 52px; margin: 8px 11px 0 0; padding: 3px; background: #eee; border: 1px solid #999; border-right: 2px solid #555; border-bottom: 2px solid #555; box-shadow: inset 1px 1px #fff; }
.swatch span { display: block; height: 100%; border: 1px dotted #222; padding: 2px; }
.swatch span::before { content: ""; display: block; height: 100%; background: #0f0; border: 1px solid #355; }
.dfoot { flex: none; display: flex; justify-content: center; gap: 4px; padding: 6px 1px 0 0; }
.dfoot button { width: 60px; height: 21px; display: flex; align-items: center; justify-content: center; gap: 4px; border: 1px solid #fff; border-right: 2px solid #777; border-bottom: 2px solid #777; padding-top: 1px; font: 10px/12px "DejaVu Sans Condensed", sans-serif; }
.dialog { padding-bottom: 3px; }
.dfoot svg { width: 14px; height: 14px; }
.spot { position: absolute; left: 215px; top: 309px; width: 64px; height: 64px; border-radius: 50%; background: rgba(244, 110, 180, .58); }
.spot svg { position: absolute; left: 28px; top: 16px; width: 14px; height: 14px; }
.status { flex: none; height: 17px; display: flex; align-items: center; background: #f0f0ee; border-top: 1px solid #999; border-bottom: 1px solid #777; font: 10px/12px Roboto, sans-serif; }
.status > * { height: 15px; padding-top: 2px; display: flex; align-items: center; justify-content: center; border-right: 1px solid #bbb; flex: none; white-space: nowrap; }
.status svg { width: 13px; height: 13px; }
.s0 { width: 20px; }
.s1 { width: 29px; }
.s2 { width: 29px; }
.s3 { width: 51px; }
.s4 { width: 116px; }
.s5 { width: 77px; gap: 2px; }
.s6 { width: 75px; }
.s7 { width: 82px; }
.status .s5 { justify-content: flex-start; padding-left: 2px; }
.status .s8 { flex: 1; border: 0; }
.taskbar { flex: none; height: 32px; display: flex; background: linear-gradient(90deg, #8098b8, #8ba4c6 8%, #a5bddd 22%, #a5bddd 87%, #7c93b3 92%, #7c93b3); border-top: 1px solid #c4d4e8; }
.start { width: 44px; margin-right: 2px; display: grid; place-items: center; }
.start svg { width: 30px; height: 30px; }
.task { width: 48px; margin-right: 2px; border: 1px solid #6f88ab; border-bottom: 0; border-radius: 3px 3px 0 0; background: linear-gradient(#d3deed, #adc0dc); box-shadow: inset 0 0 0 1px #e4ecf6; display: grid; place-items: center; }
.task.active { background: linear-gradient(#f0f4fa, #cfdcee); }
.task.plain { background: none; border-color: transparent; box-shadow: none; }
.task svg { width: 27px; height: 27px; }
.tray { margin-left: auto; display: flex; align-items: center; gap: 3px; padding-right: 3px; }
.tray svg { width: 16px; height: 16px; }
.tray .up { width: 7px; height: 5px; margin-right: 6px; }
.clock { width: 60px; display: flex; flex-direction: column; justify-content: center; align-items: center; color: #fff; font: 9px/13px "Noto Sans", sans-serif; }
.peek { width: 9px; border-left: 1px solid #566a86; background: linear-gradient(90deg, #6a809e, #a8b8cc); }
.activate { position: absolute; right: 0; bottom: 13px; width: 128px; color: #a9a9a9; font-family: "Noto Sans", "Noto Sans CJK SC", sans-serif; white-space: nowrap; overflow: hidden; pointer-events: none; }
.activate strong { display: block; font-weight: normal; font-size: 16px; line-height: 20px; }
.activate small { display: block; font-size: 12px; line-height: 16px; opacity: .3; }
</style>
